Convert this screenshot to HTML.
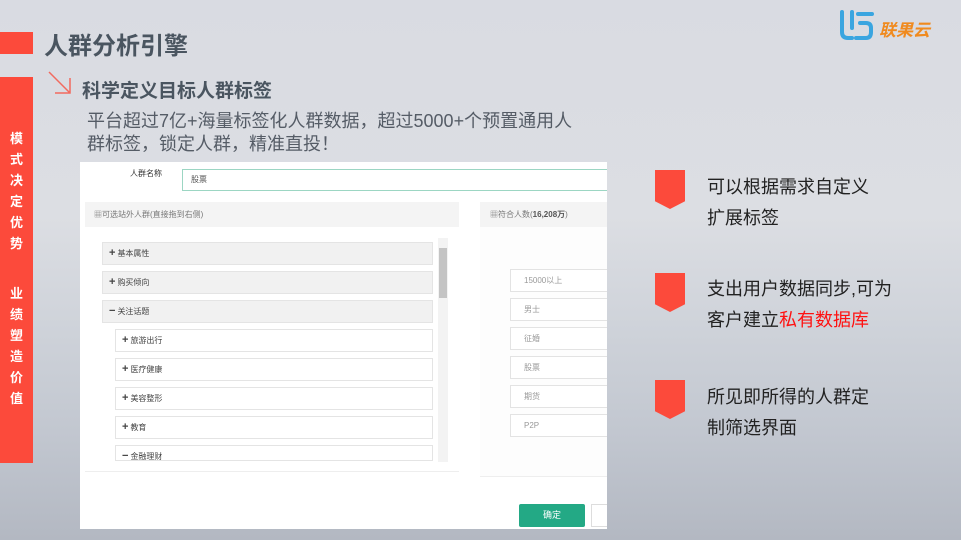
<!DOCTYPE html>
<html><head><meta charset="utf-8"><style>
*{margin:0;padding:0;box-sizing:border-box}
body{width:961px;height:540px;overflow:hidden;position:relative;font-family:"Liberation Sans","Noto Sans CJK SC",sans-serif;
background:linear-gradient(180deg,#d9dbe2 0%,#dcdee3 40%,#cfd3da 60%,#c2c7d0 80%,#b3b8c2 100%);}
.abs{position:absolute}
.red{background:#fc4a3b}
.vt{color:#fff;font-weight:bold;font-size:13px;width:33px;text-align:center;line-height:21px}
.item{position:absolute;left:22px;width:331px;height:23px;background:#f1f1f1;border:1px solid #e4e4e4;font-size:8px;color:#444;padding-left:6px;line-height:21px}
.sub{left:35px;width:318px;background:#fff}
.item b{font-size:11px;margin-right:2px}
.tag{position:absolute;left:430px;width:100px;height:23px;border:1px solid #e3e3e3;background:#fff;font-size:8px;color:#999;padding-left:13px;line-height:21px}
.flag{position:absolute;left:655px;width:30px;height:39px;background:#fc4a3b;clip-path:polygon(0 0,100% 0,100% 80%,50% 100%,0 80%)}
.ft{position:absolute;left:707px;font-size:18px;line-height:31px;color:#222}
</style></head><body>
<div class="abs red" style="left:0;top:32px;width:33px;height:22px"></div>
<div class="abs red" style="left:0;top:77px;width:33px;height:386px"></div>
<div class="abs vt" style="left:0;top:128px">模<br>式<br>决<br>定<br>优<br>势</div>
<div class="abs vt" style="left:0;top:283px">业<br>绩<br>塑<br>造<br>价<br>值</div>
<div class="abs" style="left:44px;top:26px;font-size:24px;font-weight:bold;color:#4a5560">人群分析引擎</div>
<svg class="abs" style="left:47px;top:70px" width="26" height="26"><path d="M2 2 L23 23 M23 8 L23 23 L8 23" stroke="#f26a5e" stroke-width="1.5" fill="none"/></svg>
<div class="abs" style="left:82px;top:76px;font-size:19px;font-weight:bold;color:#4a5560">科学定义目标人群标签</div>
<div class="abs" style="left:87px;top:110px;font-size:18px;line-height:23px;color:#555c66;width:540px">平台超过7亿+海量标签化人群数据，超过5000+个预置通用人<br>群标签，锁定人群，精准直投！</div>
<svg class="abs" style="left:838px;top:8px" width="40" height="34"><path d="M4 4 V24 Q4 30 10 30 H14 M14 4 V20 M18 30 H28 Q33 30 33 24 V20 Q33 15 28 15 H22 M20 6 H34" stroke="#3aa5e0" stroke-width="4" fill="none" stroke-linecap="round"/></svg>
<div class="abs" style="left:879px;top:16px;font-size:17px;font-weight:bold;color:#f08a1e;font-style:italic">联果云</div>

<div class="abs" style="left:80px;top:162px;width:527px;height:367px;background:#fff;overflow:hidden">
 <div class="abs" style="left:50px;top:6px;font-size:8px;color:#333">人群名称</div>
 <div class="abs" style="left:102px;top:7px;width:430px;height:22px;border:1px solid #9cd6c3;font-size:8px;color:#555;padding-left:8px;line-height:20px">股票</div>
 <div class="abs" style="left:5px;top:40px;width:374px;height:25px;background:#f4f4f4;font-size:8px;color:#777;padding-left:9px;line-height:25px">▦可选站外人群(直接拖到右侧)</div>
 <div class="abs" style="left:5px;top:65px;width:374px;height:245px;border-bottom:1px solid #eee"></div>
 <div class="abs" style="left:400px;top:40px;width:130px;height:25px;background:#f4f4f4;font-size:8px;color:#777;padding-left:10px;line-height:25px">▦符合人数(<b style="color:#555">16,208万</b>)</div>
 <div class="abs" style="left:400px;top:65px;width:130px;height:250px;border-bottom:1px solid #eee;background:#fdfdfd"></div>
 <div class="item" style="top:80px"><b>+</b>基本属性</div>
 <div class="item" style="top:109px"><b>+</b>购买倾向</div>
 <div class="item" style="top:138px"><b>−</b>关注话题</div>
 <div class="item sub" style="top:167px"><b>+</b>旅游出行</div>
 <div class="item sub" style="top:196px"><b>+</b>医疗健康</div>
 <div class="item sub" style="top:225px"><b>+</b>美容整形</div>
 <div class="item sub" style="top:254px"><b>+</b>教育</div>
 <div class="item sub" style="top:283px;height:16px;overflow:hidden"><b>−</b>金融理财</div>
 <div class="abs" style="left:358px;top:76px;width:10px;height:224px;background:#f3f3f3"></div>
 <div class="abs" style="left:359px;top:86px;width:8px;height:50px;background:#c4c4c4"></div>
 <div class="tag" style="top:107px">15000以上</div>
 <div class="tag" style="top:136px">男士</div>
 <div class="tag" style="top:165px">征婚</div>
 <div class="tag" style="top:194px">股票</div>
 <div class="tag" style="top:223px">期货</div>
 <div class="tag" style="top:252px">P2P</div>
 <div class="abs" style="left:439px;top:342px;width:66px;height:23px;background:#23a985;color:#fff;font-size:9px;text-align:center;line-height:23px;border-radius:2px">确定</div>
 <div class="abs" style="left:511px;top:342px;width:20px;height:23px;border:1px solid #ddd"></div>
</div>

<div class="flag" style="top:170px"></div>
<div class="ft" style="top:172px">可以根据需求自定义<br>扩展标签</div>
<div class="flag" style="top:273px"></div>
<div class="ft" style="top:274px">支出用户数据同步,可为<br>客户建立<span style="color:#f11">私有数据库</span></div>
<div class="flag" style="top:380px"></div>
<div class="ft" style="top:382px">所见即所得的人群定<br>制筛选界面</div>
</body></html>
